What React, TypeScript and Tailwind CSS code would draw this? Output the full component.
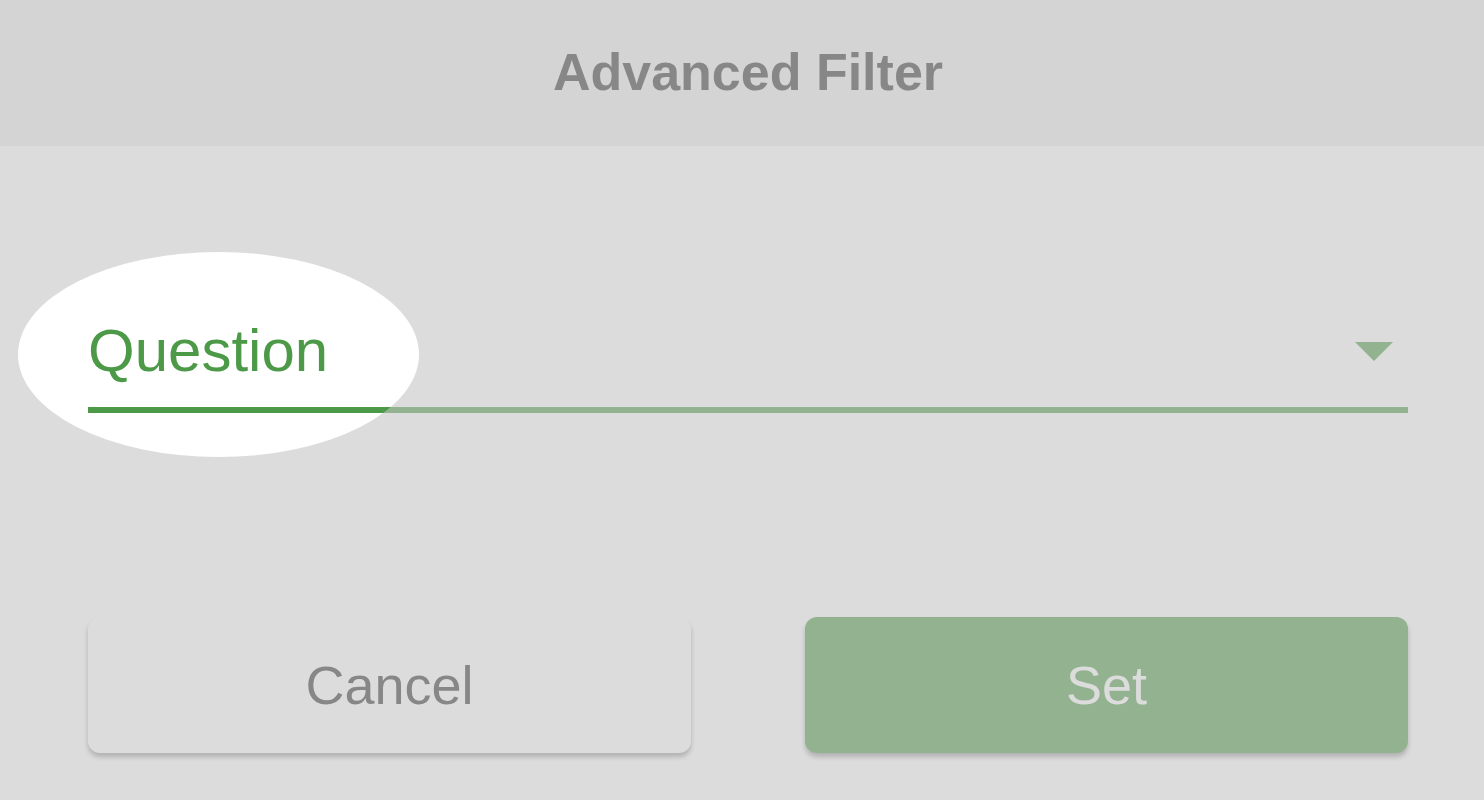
export default function App() {
  return (
    <div
      className="relative w-[1484px] h-[800px] overflow-hidden bg-white"
      style={{ fontFamily: '"Liberation Sans", Arial, sans-serif' }}
    >
      <div className="h-[146px] bg-[#ebebeb] flex items-center justify-center pl-[12px] pb-[2px]">
        <h1 className="text-[52px] leading-none font-bold text-[#313131]">Advanced Filter</h1>
      </div>
      <div className="pl-[88px] pr-[76px] pt-[175px]">
        <div className="flex items-start justify-between border-b-[6px] border-[#4c9a47] pb-[26px]">
          <span className="text-[60px] leading-none text-[#4c9a47]">Question</span>
          <svg width="38" height="19" viewBox="0 0 38 19" className="mt-[21px] mr-[15px]">
            <polygon points="0,0 38,0 19,19" fill="#4c9a47" />
          </svg>
        </div>
        <div className="mt-[204px] flex justify-between">
          <button className="w-[603px] h-[136px] rounded-[12px] bg-white text-[#313131] text-[54px] shadow-[0_4px_5px_rgba(0,0,0,0.4)]">
            Cancel
          </button>
          <button className="w-[603px] h-[136px] rounded-[12px] bg-[#4c9a47] text-white text-[54px] shadow-[0_4px_5px_rgba(0,0,0,0.4)]">
            Set
          </button>
        </div>
      </div>
      <div className="absolute left-[18px] top-[252px] w-[401px] h-[205px] rounded-[50%] shadow-[0_0_0_3000px_rgba(196,196,196,0.59)]" />
    </div>
  );
}
